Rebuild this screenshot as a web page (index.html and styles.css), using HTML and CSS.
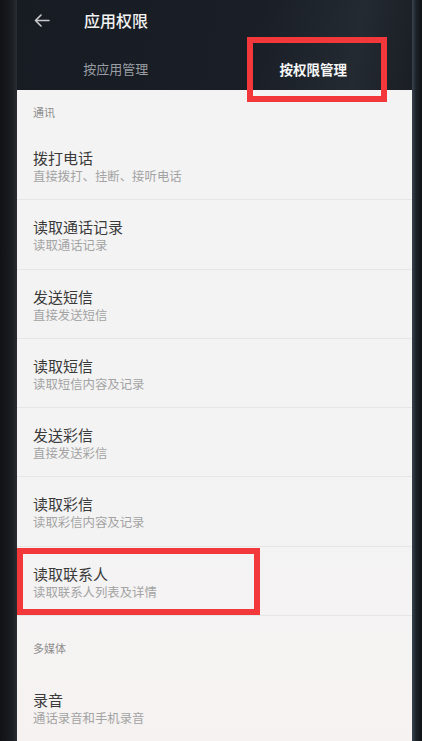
FILE: index.html
```html
<!DOCTYPE html>
<html lang="zh-CN">
<head>
<meta charset="utf-8">
<title>应用权限</title>
<link rel="stylesheet" href="styles.css">
</head>
<body>
<div class="phone">
  <div class="bezel-left"></div>
  <div class="screen">
    <header class="header">
      <div class="topbar">
        <svg class="back" width="16" height="13" viewBox="0 0 16 13"><path d="M15 6.5H1.5M7 1L1.5 6.5 7 12" fill="none" stroke="#c9cbcd" stroke-width="1.6" stroke-linecap="round" stroke-linejoin="round"/></svg>
        <span class="title">应用权限</span>
      </div>
      <div class="tabs">
        <div class="tab">按应用管理</div>
        <div class="tab active">按权限管理</div>
      </div>
    </header>
    <main class="list">
      <div class="section">通讯</div>
      <div class="row"><div class="r-title">拨打电话</div><div class="r-sub">直接拨打、挂断、接听电话</div></div>
      <div class="row"><div class="r-title">读取通话记录</div><div class="r-sub">读取通话记录</div></div>
      <div class="row"><div class="r-title">发送短信</div><div class="r-sub">直接发送短信</div></div>
      <div class="row"><div class="r-title">读取短信</div><div class="r-sub">读取短信内容及记录</div></div>
      <div class="row"><div class="r-title">发送彩信</div><div class="r-sub">直接发送彩信</div></div>
      <div class="row"><div class="r-title">读取彩信</div><div class="r-sub">读取彩信内容及记录</div></div>
      <div class="row"><div class="r-title">读取联系人</div><div class="r-sub">读取联系人列表及详情</div></div>
      <div class="section section-2">多媒体</div>
      <div class="row"><div class="r-title">录音</div><div class="r-sub">通话录音和手机录音</div></div>
    </main>
  </div>
  <div class="bezel-right"></div>
  <div class="mark mark-tab"></div>
  <div class="mark mark-row"></div>
</div>
</body>
</html>
```
FILE: styles.css
```css
html, body {
  margin: 0;
  padding: 0;
  height: 100%;
  overflow: hidden;
  background: #14171b;
}
body {
  font-family: "Noto Sans CJK SC", "Noto Sans", sans-serif;
}
.phone {
  position: relative;
  display: flex;
  width: 422px;
  height: 741px;
  overflow: hidden;
}
.bezel-left {
  width: 17px;
  flex: none;
  background: linear-gradient(90deg, #101215 0%, #1b1e22 70%, #2a2d31 100%);
}
.bezel-right {
  width: 10px;
  flex: none;
  background: linear-gradient(90deg, #3a4450 0%, #1c2228 40%, #0f1215 100%);
}
.screen {
  flex: 1;
  display: flex;
  flex-direction: column;
  background: #f3f3f3;
}
.header {
  height: 90px;
  flex: none;
  background: linear-gradient(100deg, #171b22 0%, #1a1f27 60%, #242a32 85%, #1a1e24 100%);
}
.topbar {
  height: 40px;
  display: flex;
  align-items: center;
}
.back {
  margin-left: 17px;
  flex: none;
}
.title {
  margin-left: 34px;
  font-size: 16px;
  line-height: 40px;
  color: #f2f2f2;
  font-weight: 500;
}
.tabs {
  display: flex;
  padding-top: 8px;
}
.tab {
  flex: 1;
  text-align: center;
  font-size: 13px;
  line-height: 42px;
  color: #9a9ea4;
}
.tab.active {
  color: #f6f6f6;
  font-weight: 700;
  font-size: 13.5px;
}
.list {
  flex: 1;
  background: linear-gradient(180deg, #f3f3f3 0%, #f4f3f3 70%, #f6f2f2 100%);
}
.section {
  height: 41px;
  box-sizing: border-box;
  padding: 13px 0 0 16px;
  font-size: 11px;
  line-height: 18px;
  color: #8e8e8e;
}
.section-2 {
  height: 57px;
  padding-top: 23px;
}
.row {
  height: 69.25px;
  box-sizing: border-box;
  padding: 18px 0 0 16px;
  border-bottom: 1px solid #e6e6e6;
}
.r-title {
  font-size: 15px;
  line-height: 18px;
  color: #3a3a3a;
}
.r-sub {
  margin-top: 1px;
  font-size: 12.4px;
  line-height: 16px;
  color: #a3a3a3;
}
.mark {
  position: absolute;
  box-sizing: border-box;
  border: 6px solid #f2383b;
}
.mark-tab {
  left: 247px;
  top: 37px;
  width: 140px;
  height: 65px;
}
.mark-row {
  left: 17px;
  top: 548px;
  width: 243px;
  height: 67px;
}
```
